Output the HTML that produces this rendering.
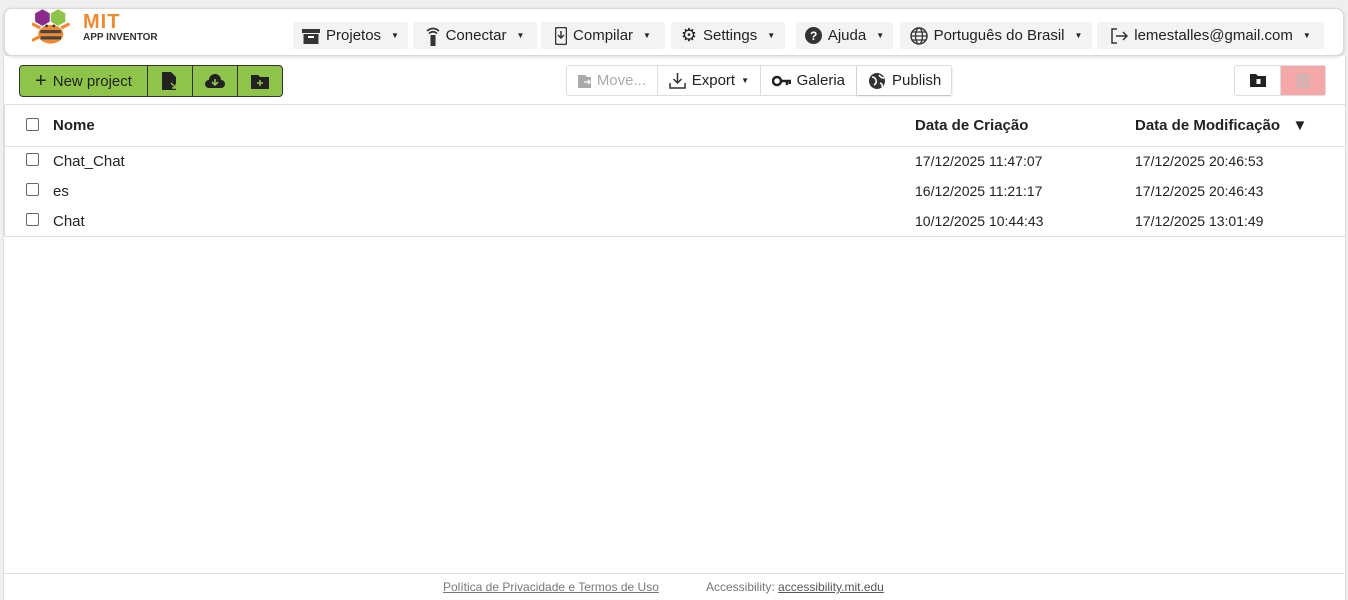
<!DOCTYPE html>
<html><head><meta charset="utf-8"><style>
*{box-sizing:border-box;margin:0;padding:0}
body{width:1348px;height:600px;background:#efefef;font-family:"Liberation Sans",sans-serif;color:#222;position:relative;overflow:hidden;font-size:15px}
.main{position:absolute;left:3px;top:56px;width:1343px;height:544px;background:#fff;border-left:1px solid #ddd;border-right:1px solid #ddd}
.hdr{position:absolute;left:4px;top:8px;width:1340px;height:48px;background:#fff;border:1px solid #d8d8d8;border-radius:8px;box-shadow:0 1px 3px rgba(0,0,0,.15)}
.nav{position:absolute;top:22px;height:27px;background:#f3f3f3;border-radius:3px;display:flex;align-items:center;justify-content:center;padding:0 8px;font-size:15px;color:#222;gap:6px;white-space:nowrap}
.nav .c{font-size:8px;margin-left:4px}
.grp{position:absolute;top:65px;height:32px;background:#8fc44a;border:1.5px solid #333;border-radius:4px;display:flex}
.grp div{height:100%;display:flex;align-items:center;justify-content:center;border-right:1.5px solid #333}
.grp div:last-child{border-right:none}
.tb{position:absolute;top:65px;height:31px;border:1px solid #ddd;border-radius:3px;display:flex;background:#fff}
.tb div{display:flex;align-items:center;padding:0 11px;border-right:1px solid #ddd;gap:6px;white-space:nowrap}
.tb div:last-child{border-right:none}
.tbl{position:absolute;left:4px;top:104px;width:1342px;height:133px;border:1px solid #ddd;border-radius:2px}
.cb{position:absolute;left:21px;width:13px;height:13px;border:1px solid #666;border-radius:2px;background:#fff}
.foot{position:absolute;left:4px;top:573px;width:1340px;border-top:1px solid #ddd;height:27px;font-size:12px;color:#777}
</style></head><body>
<div class="main"></div>
<div class="hdr"></div>
<svg style="position:absolute;left:32px;top:9px" width="50" height="40" viewBox="0 0 48 38">
<polygon points="3,4 10,0 17,4 17,12 10,16 3,12" fill="#8a2a8a"/>
<polygon points="18,4 25,0 32,4 32,12 25,16 18,12" fill="#8fc44a"/>
<ellipse cx="18" cy="24" rx="12" ry="9" fill="#f08a30"/>
<rect x="8" y="20" width="20" height="3" fill="#444"/><rect x="8" y="26" width="20" height="3" fill="#444"/>
<circle cx="14" cy="16" r="1.3" fill="#333"/><circle cx="21" cy="16" r="1.3" fill="#333"/>
<path d="M0 14 L8 18 M0 30 L8 26 M36 14 L28 18" stroke="#f08a30" stroke-width="3"/>
</svg>
<div style="position:absolute;left:83px;top:11px;font-weight:bold;color:#f08a30;font-size:20px;letter-spacing:1px">MIT</div>
<div style="position:absolute;left:83px;top:32px;font-weight:bold;color:#333;font-size:10px">APP INVENTOR</div>

<div class="nav" style="left:293px;width:115px"><svg width="18" height="16"><rect x="0" y="1" width="18" height="4" fill="#333"/><rect x="1.5" y="6" width="15" height="10" fill="#333"/><rect x="6" y="8" width="6" height="2" fill="#fff"/></svg>Projetos<span class="c">▼</span></div>
<div class="nav" style="left:413px;width:124px"><svg width="14" height="20"><path d="M1 5 Q7 0 13 5 M3 7.5 Q7 4 11 7.5" stroke="#333" stroke-width="1.6" fill="none"/><rect x="4.5" y="9" width="5" height="11" fill="#333"/></svg>Conectar<span class="c">▼</span></div>
<div class="nav" style="left:541px;width:124px"><svg width="12" height="18"><rect x="0.5" y="0.5" width="11" height="17" rx="1.5" fill="none" stroke="#333" stroke-width="1.5"/><path d="M6 4v7M3 8l3 3 3-3" stroke="#333" stroke-width="1.5" fill="none"/></svg>Compilar<span class="c">▼</span></div>
<div class="nav" style="left:671px;width:114px"><span style="font-size:18px">⚙</span>Settings<span class="c">▼</span></div>
<div class="nav" style="left:796px;width:97px"><svg width="17" height="17"><circle cx="8.5" cy="8.5" r="8.5" fill="#333"/><text x="5" y="13" fill="#fff" font-size="12" font-weight="bold" font-family="Liberation Sans">?</text></svg>Ajuda<span class="c">▼</span></div>
<div class="nav" style="left:900px;width:192px"><svg width="18" height="18"><circle cx="9" cy="9" r="8" fill="none" stroke="#333" stroke-width="1.5"/><ellipse cx="9" cy="9" rx="3.5" ry="8" fill="none" stroke="#333" stroke-width="1.3"/><path d="M1 9h16M2.5 5h13M2.5 13h13" stroke="#333" stroke-width="1.2"/></svg>Português do Brasil<span class="c">▼</span></div>
<div class="nav" style="left:1097px;width:227px"><svg width="18" height="18"><path d="M7 2H2v14h5" fill="none" stroke="#333" stroke-width="1.5"/><path d="M6 9h11M13 5l4 4-4 4" fill="none" stroke="#333" stroke-width="1.5"/></svg>lemestalles@gmail.com<span class="c">▼</span></div>

<div class="grp" style="left:19px;width:264px">
<div style="width:128px;font-size:15px;gap:6px"><span style="font-size:20px;line-height:1">+</span>New project</div>
<div style="width:45px"><svg width="16" height="18"><path d="M0 0h9l5 5v13H0z" fill="#222"/><path d="M9 11l5 5M14 12v4h-4" stroke="#8fc44a" stroke-width="1.5" fill="none"/></svg></div>
<div style="width:45px"><svg width="20" height="14"><path d="M4 14a4 4 0 0 1 0-8 6 6 0 0 1 12 0 4 4 0 0 1 0 8z" fill="#222"/><path d="M10 5v6M7 8l3 3 3-3" stroke="#8fc44a" stroke-width="1.6" fill="none"/></svg></div>
<div style="flex:1"><svg width="18" height="15"><path d="M0 1h7l2 2h9v12H0z" fill="#222"/><path d="M9 6v6M6 9h6" stroke="#8fc44a" stroke-width="1.5"/></svg></div>
</div>

<div class="tb" style="left:566px;width:386px">
<div style="color:#aaa;width:91px"><svg width="18" height="14"><path d="M0 1h7l2 2h9v11H0z" fill="#aaa"/><path d="M6 8h6M10 6l2 2-2 2" stroke="#fff" stroke-width="1.3" fill="none"/></svg>Move...</div>
<div style="width:103px"><svg width="17" height="17"><path d="M8.5 1v10M4.5 7l4 4 4-4M1 11v5h15v-5" stroke="#333" stroke-width="1.5" fill="none"/></svg>Export<span style="font-size:8px">▼</span></div>
<div style="width:96px"><svg width="20" height="12"><circle cx="5" cy="6" r="4" fill="none" stroke="#222" stroke-width="2.5"/><path d="M9 6h10M15 6v4M18 6v3" stroke="#222" stroke-width="2.5"/></svg>Galeria</div>
<div style="flex:1;box-shadow:0 1px 2px rgba(0,0,0,.15)"><svg width="18" height="18"><circle cx="9" cy="9" r="8" fill="#333"/><path d="M4 5q3 0 4 3t-2 5M11 3q2 3 5 3M12 11q3 1 2 4" stroke="#fff" stroke-width="1.6" fill="none"/></svg>Publish</div>
</div>

<div class="tb" style="left:1234px;width:92px;top:65px">
<div style="width:46px;justify-content:center;padding:0"><svg width="16" height="13"><path d="M0 0h6l2 2h8v11H0z" fill="#222"/><rect x="6.5" y="5" width="4" height="5" fill="#fff"/></svg></div>
<div style="flex:1;background:#f4a9a8;justify-content:center;padding:0"><svg width="12" height="14"><rect x="0" y="0" width="12" height="14" fill="#bbb" opacity=".7"/><path d="M4 3v9M8 3v9" stroke="#f4a9a8" stroke-width="1.4"/></svg></div>
</div>

<div class="tbl">
<div style="position:absolute;left:0;top:41px;width:100%;border-top:1px solid #e2e2e2"></div>
<div class="cb" style="top:13px"></div>
<div style="position:absolute;left:48px;top:12px;font-weight:bold">Nome</div>
<div style="position:absolute;left:910px;top:12px;font-weight:bold">Data de Criação</div>
<div style="position:absolute;left:1130px;top:12px;font-weight:bold">Data de Modificação&nbsp;&nbsp;&nbsp;▼</div>
<div class="cb" style="top:48px"></div><div style="position:absolute;left:48px;top:48px">Chat_Chat</div><div style="position:absolute;left:910px;top:48px;font-size:14px">17/12/2025 11:47:07</div><div style="position:absolute;left:1130px;top:48px;font-size:14px">17/12/2025 20:46:53</div>
<div class="cb" style="top:78px"></div><div style="position:absolute;left:48px;top:78px">es</div><div style="position:absolute;left:910px;top:78px;font-size:14px">16/12/2025 11:21:17</div><div style="position:absolute;left:1130px;top:78px;font-size:14px">17/12/2025 20:46:43</div>
<div class="cb" style="top:108px"></div><div style="position:absolute;left:48px;top:108px">Chat</div><div style="position:absolute;left:910px;top:108px;font-size:14px">10/12/2025 10:44:43</div><div style="position:absolute;left:1130px;top:108px;font-size:14px">17/12/2025 13:01:49</div>
</div>

<div class="foot">
<span style="position:absolute;left:439px;top:6px;text-decoration:underline">Política de Privacidade e Termos de Uso</span>
<span style="position:absolute;left:702px;top:6px">Accessibility: <span style="text-decoration:underline;color:#555">accessibility.mit.edu</span></span>
</div>
</body></html>
